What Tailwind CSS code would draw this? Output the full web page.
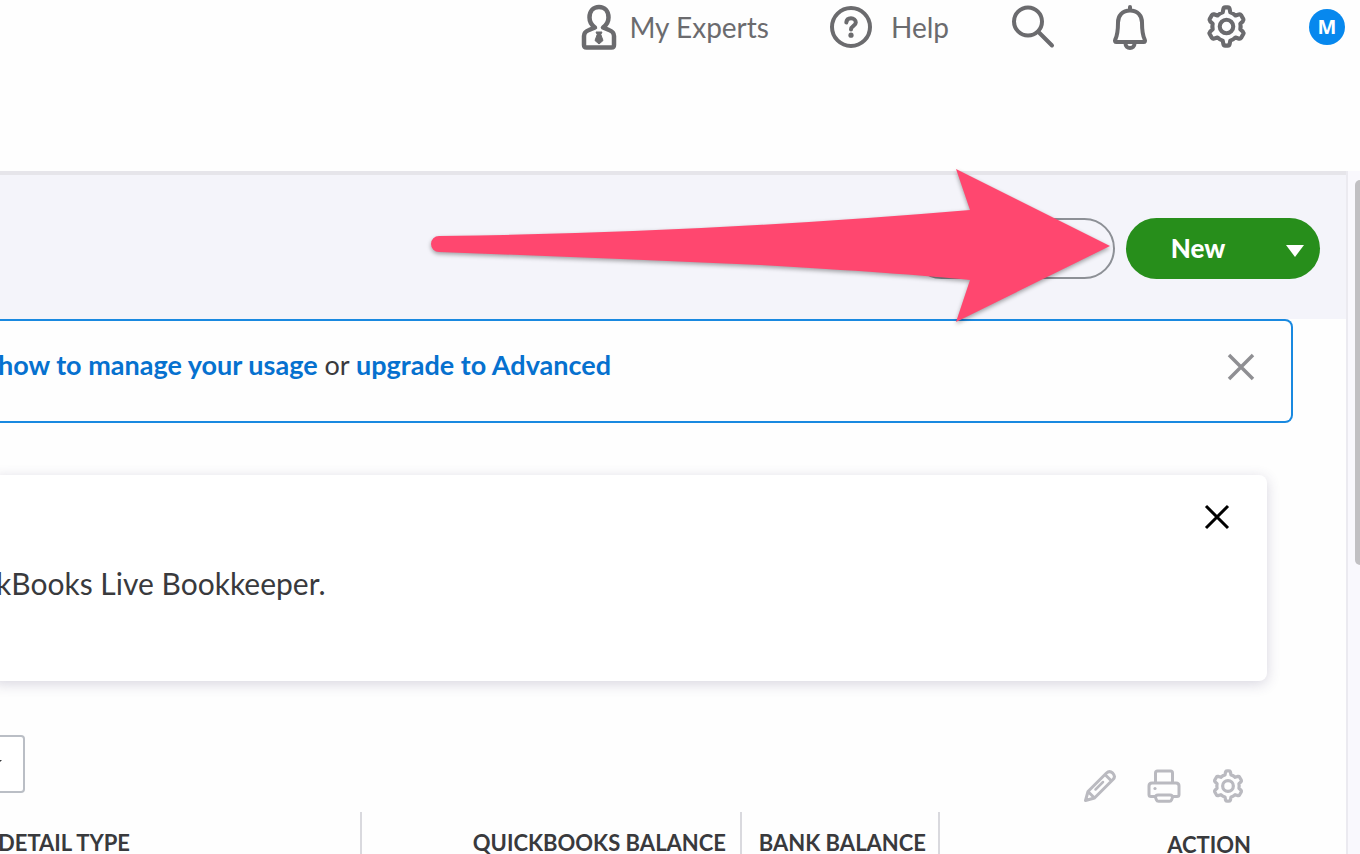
<!DOCTYPE html>
<html lang="en">
<head>
    <meta charset="UTF-8">
    <meta name="viewport" content="width=device-width, initial-scale=1.0">
    <title>Chart of Accounts</title>
    <script src="https://cdn.jsdelivr.net/npm/@tailwindcss/browser@4"></script>
</head>
<body class="flex h-screen flex-col overflow-hidden bg-[#fefefe] font-['Lato',sans-serif] text-[#393a3d]">

    <!-- Shared gear shape -->
    <svg class="hidden">
        <symbol id="gear" viewBox="0 0 42 42" fill="none" stroke="currentColor" stroke-linejoin="round">
            <path d="M17.3 7.2 18 3.6Q18.3 2.3 19.6 2.3H22.4Q23.7 2.3 24 3.6L24.7 7.2Q27.6 8 29.8 10.3L33.3 9.1Q34.5 8.7 35.2 9.8L37.4 13.7Q38 14.9 37.1 15.8L34.5 18.2Q35.1 21 34.5 23.8L37.1 26.2Q38 27.1 37.4 28.3L35.2 32.2Q34.5 33.3 33.3 32.9L29.8 31.7Q27.6 34 24.7 34.8L24 38.4Q23.7 39.7 22.4 39.7H19.6Q18.3 39.7 18 38.4L17.3 34.8Q14.4 34 12.2 31.7L8.7 32.9Q7.5 33.3 6.8 32.2L4.6 28.3Q4 27.1 4.9 26.2L7.5 23.8Q6.9 21 7.5 18.2L4.9 15.8Q4 14.9 4.6 13.7L6.8 9.8Q7.5 8.7 8.7 9.1L12.2 10.3Q14.4 8 17.3 7.2Z"/>
            <circle cx="21" cy="21" r="6.6"/>
        </symbol>
    </svg>

    <header class="flex h-[171px] shrink-0 items-start justify-end pr-[15px] text-[#6b6b6e]">
        <nav class="flex h-[53px] items-center">
            <button class="mr-[60px] flex items-center gap-3 text-[28px] leading-8">
                <svg class="h-[46px] w-9" viewBox="0 0 36 46" fill="none" stroke="currentColor" stroke-width="4.500" stroke-linejoin="round">
                    <path d="M14 23.5C10.4 21 8.5 17.7 8.5 13.5 8.5 7 12.4 3 18 3s9.500 4 9.500 10.500C27.500 17.700 25.600 21 22 23.500L28 26Q33 27.800 33 32V41Q33 43.500 30.500 43.500H5.500Q3 43.500 3 41V32Q3 27.800 8 26Z"/>
                    <path d="M15 28H21L19.800 30.500 22 36.500 18 40 14 36.500 16.200 30.500Z" fill="currentColor" stroke-width="1"/>
                </svg>
                My Experts
            </button>
            <button class="mr-[62px] flex items-center gap-[18px] text-[28px] leading-8">
                <svg class="size-[44px]" viewBox="0 0 44 44" fill="none" stroke="currentColor" stroke-width="4" stroke-linecap="round">
                    <circle cx="22" cy="22" r="19"/>
                    <path d="M17.300 17.500C17.500 14.800 19.400 13.300 22 13.300S26.800 15 26.800 17.500C26.800 21 22 20.800 22 24.500"/>
                    <circle cx="22" cy="30.200" r="2.600" fill="currentColor" stroke="none"/>
                </svg>
                Help
            </button>
            <button class="mr-[57px]" aria-label="Search">
                <svg class="size-[44px]" viewBox="0 0 44 44" fill="none" stroke="currentColor" stroke-width="4" stroke-linecap="round">
                    <circle cx="17" cy="16.500" r="14"/>
                    <path d="M27.500 27 41 40.500"/>
                </svg>
            </button>
            <button class="mr-[57px]" aria-label="Notifications">
                <svg class="h-[46px] w-9" viewBox="0 0 36 46" fill="none" stroke="currentColor" stroke-width="4" stroke-linecap="round" stroke-linejoin="round">
                    <path d="M18 6.500V3M18 6.500C10.500 6.500 6 11.500 6 18.500 6 26 5.500 31 3.300 35.500 2.600 37 3 38 4.500 38H31.500C33 38 33.400 37 32.700 35.500 30.500 31 30 26 30 18.500 30 11.500 25.500 6.500 18 6.500Z"/>
                    <path d="M13.500 39.500C13.500 42.500 15.500 44 18 44S22.500 42.500 22.500 39.500"/>
                </svg>
            </button>
            <button class="mr-[61px]" aria-label="Settings">
                <svg class="size-[43px] stroke-4"><use href="#gear"/></svg>
            </button>
            <button class="size-9 rounded-full bg-[#0788ee] font-['Open_Sans',sans-serif] text-xl font-bold text-white">M</button>
        </nav>
    </header>

    <div class="flex min-h-0 flex-1">
        <main class="min-w-0 flex-1 border-r-2 border-[#ebeaf0]">
            <section class="relative flex h-[148px] items-start justify-end gap-[11px] border-t-4 border-[#e6e5ea] bg-[#f4f4fa] pt-[43px] pr-[26px]">
                <button class="h-[61px] w-[204px] rounded-full border-2 border-[#8d9096]" aria-label="Run Report"></button>
                <div class="flex h-[61px] w-[194px] overflow-hidden rounded-full bg-[#278e1b] text-white">
                    <button class="flex-1 text-[26px] font-black">New</button>
                    <button class="flex w-[50px] items-center justify-center pt-1" aria-label="More options">
                        <svg class="h-3 w-[18px]" viewBox="0 0 18 12" fill="currentColor"><path d="M0 0H18L9 12Z"/></svg>
                    </button>
                </div>
                <!-- Pointer arrow over the toolbar -->
                <svg class="absolute -top-[15px] right-[226px] h-[180px] w-[700px] drop-shadow-[0_2px_2px_rgba(0,0,0,0.35)]" viewBox="420 160 700 180" fill="#ff476f">
                    <path d="M439 236Q700 233 970 210L956 169 1110 246 956 322 970 280Q900 273 760 265 600 258 439 252A8 8 0 0 1 439 236Z"/>
                </svg>
            </section>

            <section class="mr-[53px] flex h-[104px] items-start justify-between rounded-r-lg border-2 border-l-0 border-[#1989e0] pt-[26px] pr-9">
                <p class="-ml-0.5 text-[27px] leading-9 whitespace-nowrap"><a href="#" class="font-bold text-[#0671cf]">how to manage your usage</a> or <a href="#" class="font-bold text-[#0671cf]">upgrade to Advanced</a></p>
                <button class="pt-1.5" aria-label="Close message">
                    <svg class="size-7" viewBox="0 0 28 28" stroke="#8f8f93" stroke-width="3.500"><path d="M2 2 26 26M26 2 2 26"/></svg>
                </button>
            </section>

            <section class="mt-[52px] mr-[79px] -ml-2 flex h-[206px] items-start justify-between rounded-lg bg-white pt-7 pr-9 pl-1 shadow-[0_3px_14px_rgba(60,50,100,0.2)]">
                <p class="pt-[62px] text-[30px] leading-9 whitespace-nowrap">kBooks Live Bookkeeper.</p>
                <button aria-label="Close card">
                    <svg class="size-7" viewBox="0 0 28 28" stroke="#000" stroke-width="3"><path d="M3 3 25 25M25 3 3 25"/></svg>
                </button>
            </section>

            <div class="mt-[54px] flex h-[77px] items-start justify-between pr-[101px]">
                <div class="relative">
                    <select aria-label="Filter" class="h-[58px] w-[25px] appearance-none rounded-r-sm border-2 border-l-0 border-[#babec5] bg-white"></select>
                    <svg class="pointer-events-none absolute top-[25px] left-0 h-0.5 w-0.5" viewBox="0 0 2 2" fill="#393a3d"><path d="M0 0H2L0 2Z"/></svg>
                </div>
                <div class="flex gap-[30px] pt-[34px] text-[#babac0]">
                    <button aria-label="Edit">
                        <svg class="size-[34px]" viewBox="0 0 34 34" fill="none" stroke="currentColor" stroke-width="3" stroke-linecap="round" stroke-linejoin="round">
                            <path d="M2.500 31.500 5 22.500 23.500 4Q26.500 1 29.800 4.200 33 7.500 30 10.500L11.500 29ZM5 22.500 11.500 29M22 5.500 28.500 12"/>
                            <path d="M12.500 20.500 20 13" stroke-width="2.500"/>
                        </svg>
                    </button>
                    <button aria-label="Print">
                        <svg class="size-[34px]" viewBox="0 0 34 34" fill="none" stroke="currentColor" stroke-width="3" stroke-linejoin="round">
                            <path d="M8.500 14V4Q8.500 2 10.500 2H23.500Q25.500 2 25.500 4V14"/>
                            <path d="M8.500 27.500H4Q2 27.500 2 25.500V17Q2 14 5 14H29Q32 14 32 17V25.500Q32 27.500 30 27.500H25.500"/>
                            <path d="M11 26H23Q25.500 26 25.500 28.500L24.500 31Q24 32.300 22.500 32.300H11.500Q10 32.300 9.500 31L8.500 28.500Q8.500 26 11 26Z"/>
                            <circle cx="8" cy="19.500" r="1.600" fill="currentColor" stroke="none"/>
                        </svg>
                    </button>
                    <button aria-label="Table settings">
                        <svg class="size-[34px] stroke-4"><use href="#gear"/></svg>
                    </button>
                </div>
            </div>

            <table class="w-full table-fixed border-collapse text-[22px] leading-7 font-black whitespace-nowrap">
                <thead>
                    <tr class="h-[62px]">
                        <th class="w-[361px] border-r-2 border-[#d9d9de] p-0 text-left"><span class="-ml-0.5">DETAIL TYPE</span></th>
                        <th class="w-[380px] border-r-2 border-[#d9d9de] p-0 pr-[14px] text-right">QUICKBOOKS BALANCE</th>
                        <th class="w-[198px] border-r-2 border-[#d9d9de] p-0 pr-3 text-right">BANK BALANCE</th>
                        <th class="p-0 pt-1 pr-[95px] text-right">ACTION</th>
                    </tr>
                </thead>
            </table>
        </main>

        <!-- Scroll track -->
        <aside class="w-3 shrink-0 bg-[#f9f8fd] pt-[9px] pl-[7px]">
            <div class="h-[385px] rounded-l-md bg-[#c1c0c3]"></div>
        </aside>
    </div>

</body>
</html>
